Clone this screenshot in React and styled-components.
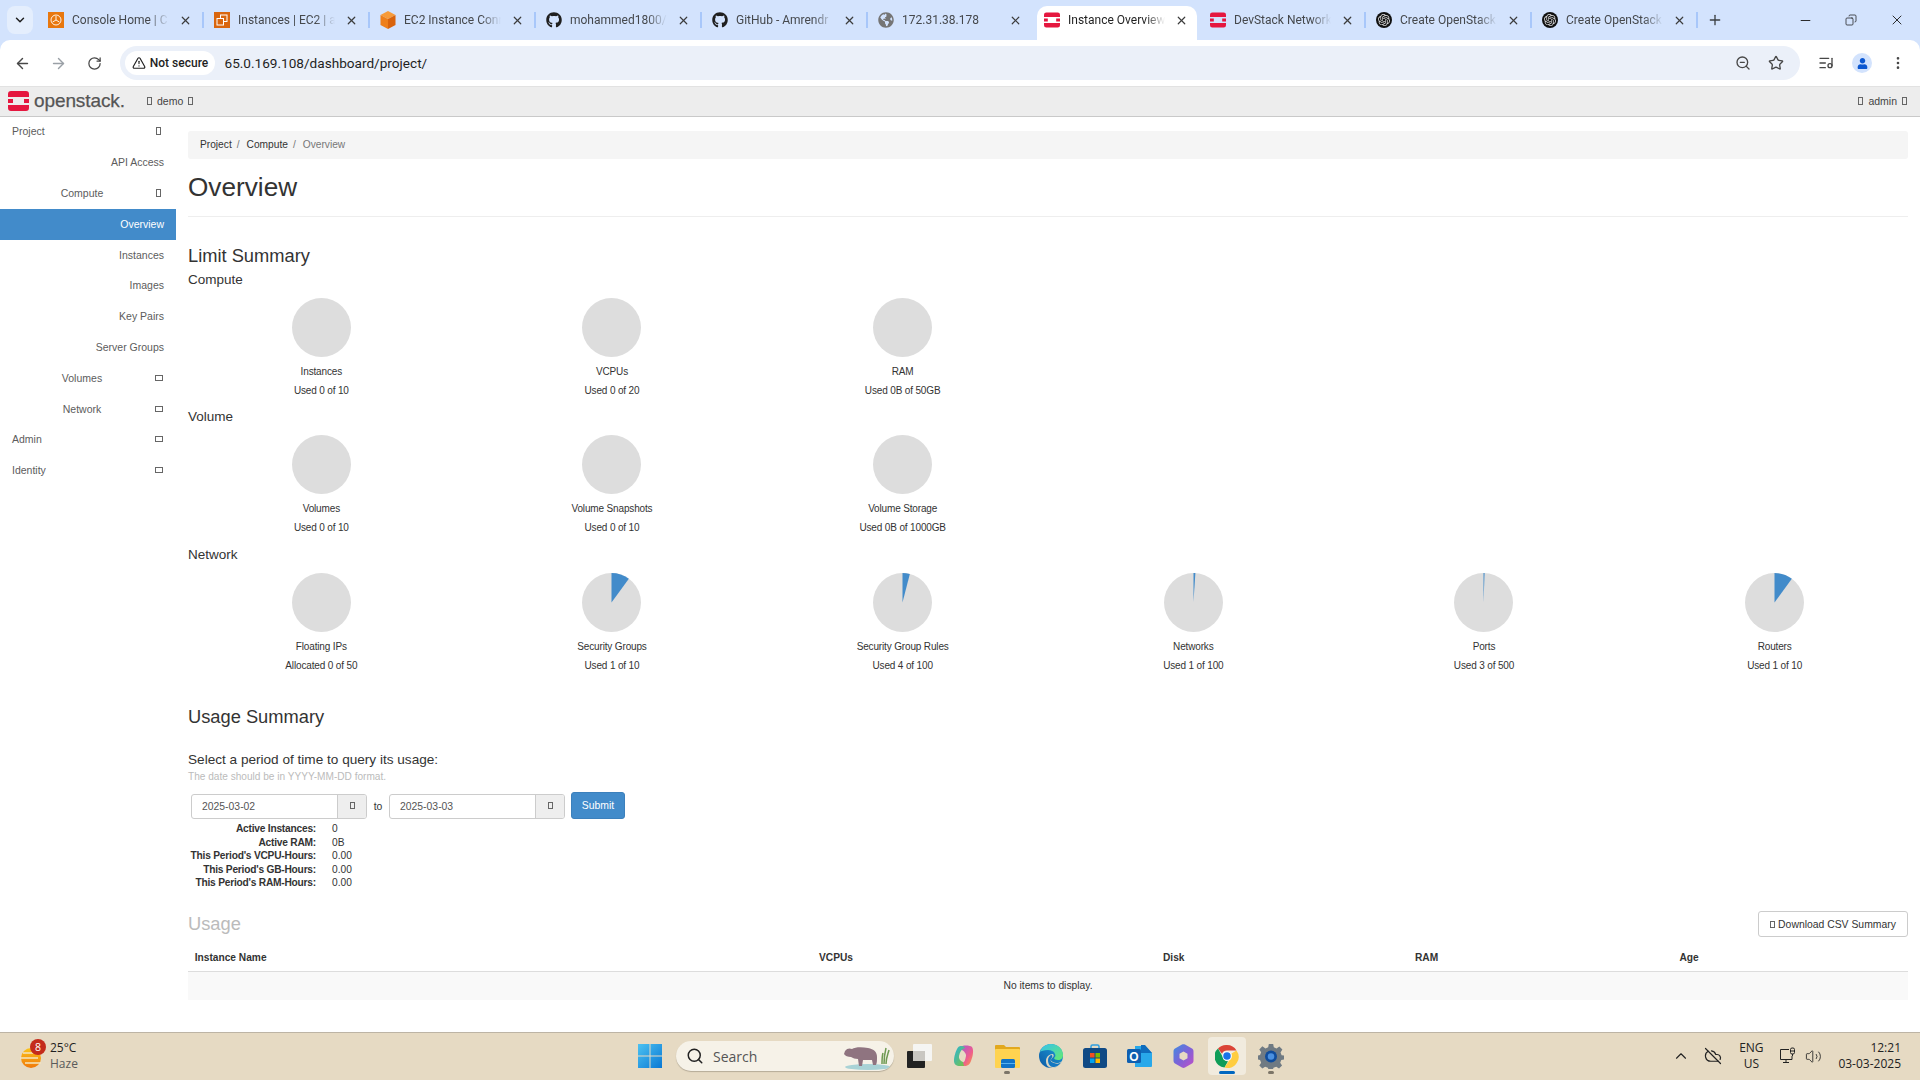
import React from "react";
import styled, { createGlobalStyle } from "styled-components";
import { ArrowLeft, ArrowRight, RotateCw, ZoomOut, Star, MoreVertical, X, Plus, Minus, Copy, ChevronDown, TriangleAlert, Search, ChevronUp, CloudOff, Volume2, ListMusic } from "lucide-react";
import { FaGithub, FaGlobeAmericas, FaUser } from "react-icons/fa";
import { SiOpenai } from "react-icons/si";

const Global = createGlobalStyle`
  html, body { margin: 0; padding: 0; height: 100%; background: #fff; }
  #root { height: 100%; }
  * { box-sizing: border-box; }
`;

const Page = styled.div`
  width: 1920px; height: 1080px; display: flex; flex-direction: column; overflow: hidden;
  font-family: "Liberation Sans", Arial, sans-serif; color: #333; background: #fff;
`;

/* ---------- browser chrome ---------- */
const TabStrip = styled.div`
  height: 40px; background: #d3e3fd; display: flex; align-items: flex-end; padding-left: 7px; flex: none;
`;
const TabSearch = styled.div`
  width: 26px; height: 28px; margin-bottom: 6px; margin-right: 5px; border-radius: 8px; background: #e4eefd;
  display: flex; align-items: center; justify-content: center; color: #1f1f1f; flex: none;
`;
const Tab = styled.div`
  position: relative; flex: none; height: 34px; display: flex; align-items: center; padding-bottom: 6px;
  width: ${p => (p.$active ? "160px" : "166px")};
  margin: ${p => (p.$active ? "0 3px" : "0")};
  padding-left: ${p => (p.$active ? "7px" : "10px")};
  padding-right: ${p => (p.$active ? "9px" : "12px")};
  background: ${p => (p.$active ? "#fff" : "transparent")};
  border-radius: 10px 10px 0 0;
  color: ${p => (p.$active ? "#1f1f1f" : "#45484c")};
  &::after {
    content: ""; position: absolute; right: 0; top: 6px; width: 2px; height: 16px;
    background: ${p => (p.$sep ? "#a8c7fa" : "transparent")};
  }
`;
const Favicon = styled.span`
  width: 16px; height: 16px; flex: none; display: flex; align-items: center; justify-content: center;
  color: ${p => p.$color || "#1f1f1f"}; margin-right: 8px;
`;
const TabTitle = styled.span`
  flex: 1; min-width: 0; white-space: nowrap; font: 12px Roboto, sans-serif;
  -webkit-mask-image: linear-gradient(90deg, #000 80%, transparent 100%);
  mask-image: linear-gradient(90deg, #000 80%, transparent 100%);
`;
const TabClose = styled.span`
  width: 14px; flex: none; display: flex; align-items: center; justify-content: center; margin-left: 9px; color: #3c3c3c;
`;
const NewTab = styled.div`
  width: 30px; height: 34px; padding-bottom: 6px; display: flex; align-items: center; justify-content: center; color: #3c4043; flex: none; margin-left: 2px;
`;
const WindowControls = styled.div`
  margin-left: auto; display: flex; align-self: stretch;
`;
const WindowButton = styled.div`
  width: 46px; display: flex; align-items: center; justify-content: center; color: #1f1f1f;
`;

const Toolbar = styled.div`
  height: 46px; flex: none; background: #d3e3fd;
`;
const ToolbarInner = styled.div`
  height: 46px; background: #fff; border-radius: 10px 10px 0 0; display: flex; align-items: center; padding: 0 4px;
`;
const ToolButton = styled.div`
  width: 36px; height: 34px; display: flex; align-items: center; justify-content: center; flex: none;
  color: ${p => p.$color || "#474747"};
`;
const Omnibox = styled.div`
  width: 1680px; height: 34px; border-radius: 17px; background: #ebf0f9; margin: 0 8px; display: flex; align-items: center; flex: none; padding: 0 7.5px 0 5px;
`;
const SecurityChip = styled.div`
  width: 90px; height: 24px; background: #fff; border-radius: 12px; display: flex; align-items: center; justify-content: center; gap: 4px;
  font: 500 12px Roboto, sans-serif; color: #1f1f1f; flex: none;
`;
const UrlText = styled.span`
  margin-left: 9.5px; font: 13.6px Roboto, sans-serif; color: #1f1f1f;
`;
const OmniActions = styled.div`
  margin-left: auto; display: flex; align-items: center;
`;
const OmniIcon = styled.div`
  width: 33px; display: flex; justify-content: center; color: #474747;
`;
const Avatar = styled.div`
  width: 20px; height: 20px; border-radius: 50%; background: #d3e3fd; color: #0b57d0; display: flex; align-items: center; justify-content: center; overflow: hidden;
`;

/* ---------- openstack header ---------- */
const Header = styled.header`
  height: 31px; flex: none; background: #ededed; border-top: 1px solid #e2e2e2; border-bottom: 1px solid #c9c9c9;
  display: flex; align-items: center; padding: 0 13px 2px 8px; font-size: 10px; color: #444;
`;
const Brand = styled.div`
  display: flex; align-items: center; gap: 5px; width: 139px; flex: none;
`;
const BrandName = styled.span`
  font-size: 19px; letter-spacing: -0.1px; color: #555; line-height: 20px; -webkit-text-stroke: 0.25px #555;
`;
const Tofu = styled.span`
  display: inline-block; flex: none; width: ${p => p.$w || 5}px; height: ${p => p.$h || 8}px; border: 1px solid ${p => p.$color || "#666"};
`;
const HeaderMenu = styled.div`
  display: flex; align-items: center; gap: 5px; font-size: 10.5px;
`;
const HeaderRight = styled(HeaderMenu)`
  margin-left: auto;
`;

/* ---------- body ---------- */
const Body = styled.div`
  flex: 1; display: flex; min-height: 0;
`;
const Sidebar = styled.nav`
  width: 176px; flex: none; font-size: 10.5px; color: #5c5c5c;
`;
const NavRow = styled.div`
  height: 30.8px; display: flex; align-items: center; padding: 0 12px 2px;
  background: ${p => (p.$active ? "#428bca" : "transparent")};
  color: ${p => (p.$active ? "#fff" : "inherit")};
`;
const NavText = styled.span`
  flex: 1; text-align: ${p => p.$align || "right"};
`;
const NavIcon = styled.span`
  width: 12px; flex: none; display: flex; justify-content: center; padding-left: 1px;
`;

const Content = styled.main`
  flex: 1; min-width: 0; padding: 14px 12px 0;
`;
const Breadcrumb = styled.div`
  height: 28px; background: #f5f5f5; border-radius: 3px; display: flex; align-items: center; padding: 0 0 2px 12px; font-size: 10.2px;
`;
const Crumb = styled.span`
  color: ${p => (p.$current ? "#777" : "#333")};
`;
const CrumbSep = styled.span`
  color: #777; padding: 0 7px 0 5px;
`;
const TitleBlock = styled.div`
  height: 58px; padding-top: 10px; border-bottom: 1px solid #eee;
`;
const Title = styled.h1`
  margin: 0; font-weight: 400; font-size: 26.2px; line-height: 36px; color: #333;
`;
const SectionTitle = styled.h3`
  margin: ${p => p.$mt || 0}px 0 ${p => p.$mb || 0}px; font-weight: 400; font-size: 18.3px; line-height: 24px; color: #333;
`;
const Quota = styled.section`
  height: 137.5px;
`;
const QuotaHeading = styled.h4`
  margin: 0 0 9px; font-weight: 400; font-size: 13.5px; line-height: 18px; color: #333;
`;
const QuotaGrid = styled.div`
  display: grid; grid-template-columns: repeat(6, 1fr); margin: 0 -12px;
`;
const QuotaItem = styled.div`
  display: flex; flex-direction: column; align-items: center; font-size: 10px; letter-spacing: -0.15px; color: #333;
`;
const PieSvg = styled.svg`
  width: 59px; height: 59px; display: block; margin-bottom: 5px;
`;
const QuotaLine = styled.div`
  line-height: 19px; white-space: nowrap;
`;
const PeriodPrompt = styled.div`
  margin-top: 22px; font-size: 13.6px; line-height: 18px; color: #333;
`;
const HelpText = styled.div`
  margin-top: 1.5px; font-size: 10.1px; line-height: 14px; color: #bbb;
`;
const DateForm = styled.form`
  margin: 8px 0 0 3px; display: flex; align-items: flex-end; height: 27px;
`;
const DateGroup = styled.div`
  width: 176px; height: 25.5px; display: flex; border: 1px solid #ccc; border-radius: 3px; overflow: hidden; background: #fff;
`;
const DateValue = styled.div`
  flex: 1; font-size: 10.4px; color: #555; padding-left: 10px; line-height: 23.5px;
`;
const DateAddon = styled.div`
  width: 29px; background: #eee; border-left: 1px solid #ccc; display: flex; align-items: center; justify-content: center; padding-bottom: 2px; flex: none;
`;
const ToLabel = styled.div`
  width: 22px; text-align: center; font-size: 10.4px; line-height: 24px; color: #333;
`;
const SubmitButton = styled.div`
  width: 54px; height: 27px; margin-left: 6px; background: #428bca; border: 1px solid #3c80bc; border-radius: 3px; color: #fff; font-size: 10.4px;
  display: flex; align-items: center; justify-content: center;
`;
const Stats = styled.dl`
  margin: 3px 0 0; display: grid; grid-template-columns: 128px 1fr; column-gap: 16px; font-size: 10.2px; line-height: 13.5px;
`;
const StatLabel = styled.dt`
  font-weight: 700; font-size: 10.2px; letter-spacing: -0.22px; text-align: right; color: #333; white-space: nowrap;
`;
const StatValue = styled.dd`
  margin: 0; color: #333;
`;
const UsageBar = styled.div`
  margin-top: 21.5px; height: 26px; display: flex; align-items: center; justify-content: space-between;
`;
const UsageTitle = styled.h3`
  margin: 0; font-weight: 400; font-size: 18.3px; line-height: 24px; color: #bbb;
`;
const DownloadButton = styled.div`
  width: 150px; height: 26px; border: 1px solid #ccc; border-radius: 3px; background: #fff; display: flex; align-items: center; justify-content: center; gap: 3px;
  font-size: 10.4px; color: #333;
`;
const TableHead = styled.div`
  margin-top: 7px; height: 27.5px; display: grid; grid-template-columns: 624.3px 344px 252px 264.5px 1fr; align-items: center;
  border-bottom: 1.5px solid #ddd; font-size: 10.2px; font-weight: 700; color: #333;
`;
const HeadCell = styled.div`
  padding-left: 6.7px;
`;
const EmptyRow = styled.div`
  height: 28px; background: #f9f9f9; display: flex; align-items: center; justify-content: center; font-size: 10.3px; color: #333;
`;

/* ---------- taskbar ---------- */
const Taskbar = styled.footer`
  height: 48px; flex: none; background: #e6dac3; border-top: 1px solid #bdb4a5; display: flex; align-items: center; padding-bottom: 1px;
`;
const Weather = styled.div`
  width: 630px; flex: none; display: flex; align-items: center; padding-left: 20px; gap: 9px;
`;
const WeatherIcon = styled.div`
  position: relative; width: 21px; height: 22px; margin-top: 4px;
`;
const WeatherBadge = styled.span`
  position: absolute; top: -8px; left: 10px; width: 16px; height: 16px; border-radius: 50%; background: #c42b1c; color: #fff;
  font: 10.5px/16px "Open Sans", sans-serif; text-align: center;
`;
const WeatherText = styled.div`
  font: 12px/16px "Open Sans", sans-serif; color: #1f1f1f;
`;
const WeatherSub = styled.div`
  color: #5a5a5a;
`;
const StartButton = styled.div`
  width: 40px; display: flex; justify-content: center; flex: none;
`;
const SearchPill = styled.div`
  width: 218px; height: 30px; margin: 0 3px 0 6px; border-radius: 15px; background: #f6f2e8; box-shadow: 0 1px 1px #b5ab98; display: flex; align-items: center; padding-left: 10px; gap: 9px; flex: none;
  font: 14px "Open Sans", sans-serif; color: #555; position: relative; overflow: hidden;
`;
const Hippo = styled.svg`
  margin-left: auto; margin-right: 3px; width: 48px; height: 28px; flex: none;
`;
const TaskIcon = styled.div`
  position: relative; width: 44px; height: 38px; display: flex; align-items: center; justify-content: center; flex: none;
  &::before {
    content: ""; position: absolute; left: 3px; right: 3px; top: 0; bottom: 0; border-radius: 4px;
    background: ${p => (p.$active ? "rgba(255,255,255,.45)" : "transparent")};
  }
  &::after {
    content: ""; position: absolute; bottom: 1px; left: 50%; height: 3px; border-radius: 2px;
    width: ${p => (p.$active ? "16px" : p.$running ? "6px" : "0")};
    margin-left: ${p => (p.$active ? "-8px" : "-3px")};
    background: ${p => (p.$active ? "#0067c0" : "#7c7568")};
  }
  & > svg { position: relative; }
`;
const Tray = styled.div`
  margin-left: auto; display: flex; align-items: center; padding-right: 19px; color: #222;
`;
const TrayIcon = styled.div`
  width: ${p => p.$w || 24}px; display: flex; justify-content: center; margin-left: ${p => p.$ml || 0}px;
`;
const TrayLang = styled.div`
  width: 40px; margin-left: 6px; text-align: center; font: 12px/16px "Open Sans", sans-serif;
`;
const TrayClock = styled.div`
  margin-left: 13px; text-align: right; font: 12px/16px "Open Sans", sans-serif;
`;

/* ---------- drawings ---------- */
const OpenStackMark = ({ size = 16, w }) => (
  <svg width={w || size} height={size} viewBox="0 0 21 20">
    <path fill="#e5173f" d="M3 0h15a3 3 0 0 1 3 3v3H0V3a3 3 0 0 1 3-3zM0 14h21v3a3 3 0 0 1-3 3H3a3 3 0 0 1-3-3zM0 8h5v4H0zM16 8h5v4h-5z" />
  </svg>
);
const AwsHome = () => (
  <svg width="16" height="16" viewBox="0 0 16 16">
    <rect width="16" height="16" fill="#e8770e" />
    <circle cx="8" cy="8" r="5" fill="none" stroke="#fff" strokeWidth=".9" />
    <path d="M8 8V4M8 8l3.4 2M8 8l-3.4 2" stroke="#fff" strokeWidth=".9" />
  </svg>
);
const AwsEc2 = () => (
  <svg width="16" height="16" viewBox="0 0 16 16">
    <rect width="16" height="16" fill="#d9660f" />
    <rect x="6.5" y="3" width="6.5" height="6.5" fill="none" stroke="#fff" />
    <rect x="3" y="6.5" width="6.5" height="6.5" fill="#d9660f" stroke="#fff" />
  </svg>
);
const Cube = () => (
  <svg width="16" height="18" viewBox="0 0 16 18">
    <path fill="#f79b3a" d="M8 0l7.5 4L8 8 .5 4z" />
    <path fill="#ee7f1a" d="M.5 4L8 8v10L.5 14z" />
    <path fill="#d9630c" d="M15.5 4L8 8v10l7.5-4z" />
  </svg>
);
const OpenAiBadge = () => (
  <svg width="16" height="16" viewBox="0 0 16 16">
    <circle cx="8" cy="8" r="8" fill="#111" />
    <svg x="2" y="2" width="12" height="12" viewBox="0 0 24 24"><SiOpenai color="#ddd" size={24} /></svg>
  </svg>
);
const WinLogo = () => (
  <svg width="24" height="24" viewBox="0 0 24 24">
    <defs><linearGradient id="wl" x1="0" y1="0" x2="1" y2="1"><stop offset="0" stopColor="#4cc2f1" /><stop offset="1" stopColor="#0a78d4" /></linearGradient></defs>
    <path fill="url(#wl)" d="M0 0h11.5v11.5H0zM12.5 0H24v11.5H12.5zM0 12.5h11.5V24H0zM12.5 12.5H24V24H12.5z" />
  </svg>
);
const TaskView = () => (
  <svg width="25" height="24" viewBox="0 0 25 24">
    <rect x="6" y="0" width="19" height="17" rx="1" fill="#f5f5f3" />
    <rect x="0" y="7" width="18" height="17" rx="1" fill="#222" />
    <rect x="6" y="7" width="12" height="10" fill="#c9c7c2" />
  </svg>
);
const Copilot = () => (
  <svg width="24" height="24" viewBox="0 0 24 24">
    <defs>
      <linearGradient id="c1" x1="0" y1="0" x2="1" y2="1"><stop offset="0" stopColor="#26b5d9" /><stop offset="1" stopColor="#7fc241" /></linearGradient>
      <linearGradient id="c2" x1="0" y1="0" x2="1" y2="1"><stop offset="0" stopColor="#a05bd8" /><stop offset=".6" stopColor="#ee5c8f" /><stop offset="1" stopColor="#f9a23c" /></linearGradient>
    </defs>
    <path fill="url(#c2)" d="M9 3c2-2 10-2 12 0 2 3 1 9-1 14-1 3-3 5-7 5-3 0-5 0-5-2l3-1c3-1 3-3 4-7 .5-2-2-5-4-6z" />
    <path fill="url(#c1)" d="M10 2c3 0 4 1 4 2l-2 1c-2 1-3 3-4 7-.5 2 1 5 4 6l1 4h-4c-4 0-6-2-6-5 0-5 2-10 3-12 1-2 2-3 4-3z" />
  </svg>
);
const Explorer = () => (
  <svg width="25" height="24" viewBox="0 0 25 24">
    <path fill="#e2a81e" d="M0 2a1 1 0 0 1 1-1h8l2 2h13a1 1 0 0 1 1 1v4H0z" />
    <rect y="5" width="25" height="19" rx="1" fill="#ffd350" />
    <rect x="6" y="15" width="14" height="9" rx="1.500" fill="#0f74c8" />
    <rect x="6" y="19" width="14" height="1" fill="#57b3f0" />
  </svg>
);
const Edge = () => (
  <svg width="24" height="24" viewBox="0 0 24 24">
    <defs>
      <linearGradient id="e1" x1="0" y1="1" x2="1" y2="0"><stop offset="0" stopColor="#0c59a4" /><stop offset="1" stopColor="#1da0dc" /></linearGradient>
      <linearGradient id="e2" x1="0" y1="0" x2="1" y2="1"><stop offset="0" stopColor="#35c1f1" /><stop offset="1" stopColor="#66eb6e" /></linearGradient>
    </defs>
    <circle cx="12" cy="12" r="12" fill="url(#e1)" />
    <path fill="url(#e2)" d="M1 8C3 2 8 0 12 0c7 0 12 5 12 11 0 3-2 5-5 5-2 0-4-1-4-2 1-1 2-2 1-4-1-3-4-4-7-4-4 0-7 1-8 2z" />
    <path fill="#e6dac3" d="M14 24c-5 0-7-3-7-7 0-4 3-7 7-7 1 1 1 3-1 4-1 1-2 3 1 4 3 2 7 1 9-1-2 4-5 7-9 7z" opacity=".95" />
    <path fill="#1377c2" d="M9 16c0-3 2-5 4-5 1 1 0 3-1 4-1 2 0 3 3 4 3 1 5 1 7-1-2 4-5 5-8 5-3 0-5-3-5-7z" />
  </svg>
);
const Store = () => (
  <svg width="24" height="24" viewBox="0 0 24 24">
    <path d="M8 5V2.500A1.500 1.500 0 0 1 9.500 1h5A1.500 1.500 0 0 1 16 2.500V5" fill="none" stroke="#2f9ee0" strokeWidth="1.500" />
    <rect y="4" width="24" height="20" rx="2.500" fill="#104a85" />
    <rect x="7" y="9" width="4.500" height="4.500" fill="#f25022" />
    <rect x="12.500" y="9" width="4.500" height="4.500" fill="#7fba00" />
    <rect x="7" y="14.500" width="4.500" height="4.500" fill="#00a4ef" />
    <rect x="12.500" y="14.500" width="4.500" height="4.500" fill="#ffb900" />
  </svg>
);
const Outlook = () => (
  <svg width="25" height="24" viewBox="0 0 25 24">
    <path fill="#28a8ea" d="M8 2h10l7 7v13a1 1 0 0 1-1 1H8z" />
    <path fill="#0f6cbd" d="M14 1h4l7 8h-11z" />
    <rect y="5" width="14" height="14" rx="1.500" fill="#0f5fb0" />
    <text x="7" y="16.500" textAnchor="middle" fontSize="12" fontWeight="700" fill="#fff" fontFamily="Liberation Sans">O</text>
  </svg>
);
const M365 = () => (
  <svg width="24" height="24" viewBox="0 0 24 24">
    <defs><linearGradient id="m1" x1="0" y1="0" x2="1" y2="1"><stop offset="0" stopColor="#3e8de0" /><stop offset=".5" stopColor="#7d63d8" /><stop offset="1" stopColor="#c14fc7" /></linearGradient></defs>
    <path fill="url(#m1)" fillRule="evenodd" d="M11 .5c1-.5 2-.5 3 0l7 4c1 .7 1.500 1.500 1.500 3v9c0 1.500-.5 2.300-1.500 3l-7 4c-1 .5-2 .5-3 0l-7-4c-1-.7-1.500-1.500-1.500-3v-9c0-1.500.5-2.300 1.500-3zM12.500 7.500l-4 2.300v4.400l4 2.300 4-2.300V9.800z" />
  </svg>
);
const ChromeLogo = () => (
  <svg width="24" height="24" viewBox="0 0 48 48">
    <path fill="#db4437" d="M24 2a22 22 0 0 1 19 11H24a11 11 0 0 0-10 6.500L6 9A22 22 0 0 1 24 2z" />
    <path fill="#0f9d58" d="M6 9l9 16a11 11 0 0 0 11 9.500l-7 12.500A22 22 0 0 1 6 9z" />
    <path fill="#ffcd40" d="M43 13a22 22 0 0 1-24 34l9-13.500A11 11 0 0 0 33 19z" />
    <circle cx="24" cy="24" r="9" fill="#fff" />
    <circle cx="24" cy="24" r="7.500" fill="#1a73e8" />
  </svg>
);
const Gear = () => (
  <svg width="26" height="26" viewBox="0 0 24 24">
    <path fill="#6f7a83" d="M10 1h4l.6 3 2.500 1 2.600-1.700 2.800 2.800L20.800 8.700l1 2.500 3 .6v0l-.8 3.500-2.500.4-1 2.500 1.700 2.600-2.800 2.800-2.600-1.700-2.500 1-.6 1.600h-4l-.6-1.600-2.500-1-2.600 1.700-2.800-2.800 1.700-2.600-1-2.500-2.500-.6v-3.500l2.500-.6 1-2.500-1.700-2.600 2.800-2.800L6.900 5l2.500-1z" />
    <circle cx="12" cy="12.500" r="5.500" fill="#0f4c9c" />
    <circle cx="12" cy="12.500" r="3" fill="#4a90e0" />
  </svg>
);
const HippoArt = () => (
  <Hippo viewBox="0 0 48 28">
    <ellipse cx="25" cy="25" rx="23" ry="3" fill="#a9d3d6" />
    <path d="M41 22c0-6 1-12 2-16M43 22c0-6 2-10 3-14M39 22c0-5 0-8 1-11" stroke="#6f9a52" strokeWidth="1.500" fill="none" />
    <path fill="#8f7480" d="M2 9c2-3 5-3 7-2 3-2 10-2 16-1 6 1 9 4 9 9 0 3 0 6-1 8h-3l-1-5h-9l-1 6h-3l-1-7c-3 0-5-1-7-2-3 0-6-1-7-3z" />
  </Hippo>
);
const HazeSun = () => (
  <svg width="21" height="22" viewBox="0 0 21 22">
    <defs><linearGradient id="hz" x1="0" y1="0" x2="0" y2="1"><stop offset="0" stopColor="#fcc419" /><stop offset="1" stopColor="#f0780a" /></linearGradient></defs>
    <circle cx="11" cy="11" r="10" fill="url(#hz)" />
    <path d="M3 6h10M0 11h18M5 16h16" stroke="#f4e5c0" strokeWidth="1.600" />
  </svg>
);
const NetIcon = () => (
  <svg width="18" height="18" viewBox="0 0 18 18" fill="none" stroke="#222" strokeWidth="1">
    <path d="M10 2.500H1.500v10H13V9M4 15.500h6M7 12.500v3" />
    <rect x="11.500" y="1" width="4" height="6" rx="1.500" />
    <path d="M13.500 7v2M11.500 4h4" />
  </svg>
);

const Pie = ({ used = 0 }) => {
  const angle = used * Math.PI * 2;
  const x = 50 + 50 * Math.sin(angle);
  const y = 50 - 50 * Math.cos(angle);
  return (
    <PieSvg viewBox="0 0 100 100">
      <circle cx="50" cy="50" r="50" fill="#dddddd" />
      {used > 0 && <path d={`M50 50L50 0A50 50 0 0 1 ${x} ${y}Z`} fill="#428bca" />}
    </PieSvg>
  );
};

/* ---------- data ---------- */
const tabs = [
  { icon: <AwsHome />, title: "Console Home | C", sep: true },
  { icon: <AwsEc2 />, title: "Instances | EC2 | a", sep: true },
  { icon: <Cube />, title: "EC2 Instance Conn", sep: true },
  { icon: <FaGithub size={16} />, title: "mohammed1800/", sep: true },
  { icon: <FaGithub size={16} />, title: "GitHub - Amrendr", sep: true },
  { icon: <FaGlobeAmericas size={16} />, color: "#757575", title: "172.31.38.178" },
  { icon: <OpenStackMark />, title: "Instance Overview", active: true },
  { icon: <OpenStackMark />, title: "DevStack Network", sep: true },
  { icon: <OpenAiBadge />, title: "Create OpenStack", sep: true },
  { icon: <OpenAiBadge />, title: "Create OpenStack", sep: true },
];
const nav = [
  { t: "Project", align: "left", w: 5, h: 8 },
  { t: "API Access" },
  { t: "Compute", align: "center", w: 5, h: 8 },
  { t: "Overview", active: true },
  { t: "Instances" },
  { t: "Images" },
  { t: "Key Pairs" },
  { t: "Server Groups" },
  { t: "Volumes", align: "center", w: 8, h: 6 },
  { t: "Network", align: "center", w: 8, h: 6 },
  { t: "Admin", align: "left", w: 8, h: 6 },
  { t: "Identity", align: "left", w: 8, h: 6 },
];
const quotas = [
  { name: "Compute", items: [["Instances", "Used 0 of 10", 0], ["VCPUs", "Used 0 of 20", 0], ["RAM", "Used 0B of 50GB", 0]] },
  { name: "Volume", items: [["Volumes", "Used 0 of 10", 0], ["Volume Snapshots", "Used 0 of 10", 0], ["Volume Storage", "Used 0B of 1000GB", 0]] },
  { name: "Network", items: [["Floating IPs", "Allocated 0 of 50", 0], ["Security Groups", "Used 1 of 10", 0.1], ["Security Group Rules", "Used 4 of 100", 0.04], ["Networks", "Used 1 of 100", 0.01], ["Ports", "Used 3 of 500", 0.006], ["Routers", "Used 1 of 10", 0.1]] },
];
const stats = [
  ["Active Instances:", "0"],
  ["Active RAM:", "0B"],
  ["This Period's VCPU-Hours:", "0.00"],
  ["This Period's GB-Hours:", "0.00"],
  ["This Period's RAM-Hours:", "0.00"],
];

export default function App() {
  return (
    <Page>
      <Global />
      <TabStrip>
        <TabSearch><ChevronDown size={14} strokeWidth={2.5} /></TabSearch>
        {tabs.map((t, i) => (
          <Tab key={i} $active={t.active} $sep={t.sep}>
            <Favicon $color={t.color}>{t.icon}</Favicon>
            <TabTitle>{t.title}</TabTitle>
            <TabClose><X size={13} strokeWidth={2.2} /></TabClose>
          </Tab>
        ))}
        <NewTab><Plus size={16} strokeWidth={2} /></NewTab>
        <WindowControls>
          <WindowButton><Minus size={15} strokeWidth={1.5} /></WindowButton>
          <WindowButton><Copy size={12} strokeWidth={1.5} style={{ transform: "scaleX(-1)" }} /></WindowButton>
          <WindowButton><X size={16} strokeWidth={1.4} /></WindowButton>
        </WindowControls>
      </TabStrip>
      <Toolbar>
        <ToolbarInner>
          <ToolButton><ArrowLeft size={17} /></ToolButton>
          <ToolButton $color="#9aa0a6"><ArrowRight size={17} /></ToolButton>
          <ToolButton><RotateCw size={15} /></ToolButton>
          <Omnibox>
            <SecurityChip><TriangleAlert size={14} />Not secure</SecurityChip>
            <UrlText>65.0.169.108/dashboard/project/</UrlText>
            <OmniActions>
              <OmniIcon><ZoomOut size={16} /></OmniIcon>
              <OmniIcon><Star size={16} /></OmniIcon>
            </OmniActions>
          </Omnibox>
          <ToolButton><ListMusic size={16} /></ToolButton>
          <ToolButton><Avatar><FaUser size={11} /></Avatar></ToolButton>
          <ToolButton><MoreVertical size={16} /></ToolButton>
        </ToolbarInner>
      </Toolbar>
      <Header>
        <Brand>
          <OpenStackMark size={20} w={21} />
          <BrandName>openstack.</BrandName>
        </Brand>
        <HeaderMenu><Tofu />demo<Tofu /></HeaderMenu>
        <HeaderRight><Tofu />admin<Tofu /></HeaderRight>
      </Header>
      <Body>
        <Sidebar>
          {nav.map(n => (
            <NavRow key={n.t} $active={n.active}>
              <NavText $align={n.align}>{n.t}</NavText>
              {n.w && <NavIcon><Tofu $w={n.w} $h={n.h} /></NavIcon>}
            </NavRow>
          ))}
        </Sidebar>
        <Content>
          <Breadcrumb>
            <Crumb>Project</Crumb><CrumbSep>/</CrumbSep>
            <Crumb>Compute</Crumb><CrumbSep>/</CrumbSep>
            <Crumb $current>Overview</Crumb>
          </Breadcrumb>
          <TitleBlock><Title>Overview</Title></TitleBlock>
          <SectionTitle $mt={27} $mb={2.5}>Limit Summary</SectionTitle>
          {quotas.map(q => (
            <Quota key={q.name}>
              <QuotaHeading>{q.name}</QuotaHeading>
              <QuotaGrid>
                {q.items.map(([label, text, used]) => (
                  <QuotaItem key={label}>
                    <Pie used={used} />
                    <QuotaLine>{label}</QuotaLine>
                    <QuotaLine>{text}</QuotaLine>
                  </QuotaItem>
                ))}
              </QuotaGrid>
            </Quota>
          ))}
          <SectionTitle $mt={21.5}>Usage Summary</SectionTitle>
          <PeriodPrompt>Select a period of time to query its usage:</PeriodPrompt>
          <HelpText>The date should be in YYYY-MM-DD format.</HelpText>
          <DateForm>
            <DateGroup>
              <DateValue>2025-03-02</DateValue>
              <DateAddon><Tofu $w={5} $h={7} /></DateAddon>
            </DateGroup>
            <ToLabel>to</ToLabel>
            <DateGroup>
              <DateValue>2025-03-03</DateValue>
              <DateAddon><Tofu $w={5} $h={7} /></DateAddon>
            </DateGroup>
            <SubmitButton>Submit</SubmitButton>
          </DateForm>
          <Stats>
            {stats.map(([k, v]) => (
              <React.Fragment key={k}>
                <StatLabel>{k}</StatLabel>
                <StatValue>{v}</StatValue>
              </React.Fragment>
            ))}
          </Stats>
          <UsageBar>
            <UsageTitle>Usage</UsageTitle>
            <DownloadButton><Tofu $w={5} $h={7} />Download CSV Summary</DownloadButton>
          </UsageBar>
          <TableHead>
            <HeadCell>Instance Name</HeadCell>
            <HeadCell>VCPUs</HeadCell>
            <HeadCell>Disk</HeadCell>
            <HeadCell>RAM</HeadCell>
            <HeadCell>Age</HeadCell>
          </TableHead>
          <EmptyRow>No items to display.</EmptyRow>
        </Content>
      </Body>
      <Taskbar>
        <Weather>
          <WeatherIcon>
            <HazeSun />
            <WeatherBadge>8</WeatherBadge>
          </WeatherIcon>
          <WeatherText>
            25°C
            <WeatherSub>Haze</WeatherSub>
          </WeatherText>
        </Weather>
        <StartButton><WinLogo /></StartButton>
        <SearchPill>
          <Search size={18} color="#222" strokeWidth={2} />
          Search
          <HippoArt />
        </SearchPill>
        <TaskIcon><TaskView /></TaskIcon>
        <TaskIcon><Copilot /></TaskIcon>
        <TaskIcon $running><Explorer /></TaskIcon>
        <TaskIcon><Edge /></TaskIcon>
        <TaskIcon><Store /></TaskIcon>
        <TaskIcon><Outlook /></TaskIcon>
        <TaskIcon><M365 /></TaskIcon>
        <TaskIcon $active><ChromeLogo /></TaskIcon>
        <TaskIcon $running><Gear /></TaskIcon>
        <Tray>
          <TrayIcon><ChevronUp size={18} strokeWidth={1.5} /></TrayIcon>
          <TrayIcon $ml={8}><CloudOff size={18} strokeWidth={1.6} /></TrayIcon>
          <TrayLang>ENG<br />US</TrayLang>
          <TrayIcon $ml={6} $w={22}><NetIcon /></TrayIcon>
          <TrayIcon $ml={2}><Volume2 size={17} strokeWidth={1.2} /></TrayIcon>
          <TrayClock>12:21<br />03-03-2025</TrayClock>
        </Tray>
      </Taskbar>
    </Page>
  );
}
